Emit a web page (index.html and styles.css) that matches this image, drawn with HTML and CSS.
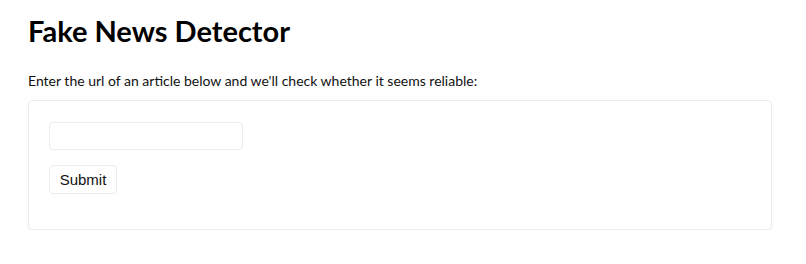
FILE: index.html
```html
<!DOCTYPE html>
<html>
<head>
<meta charset="utf-8">
<link rel="stylesheet" href="styles.css">
</head>
<body>
<div class="page">
  <h1 class="title">Fake News Detector</h1>
  <p class="intro">Enter the url of an article below and we'll check whether it seems reliable:</p>
  <form class="card">
    <input class="url-input" type="text">
    <button class="submit" type="button">Submit</button>
  </form>
</div>
</body>
</html>
```
FILE: styles.css
```css
html, body {
  margin: 0;
  padding: 0;
  background: #fff;
}
.page {
  padding: 14px 34px 0 28px;
  font-family: Lato, "Noto Sans", sans-serif;
  color: #111;
}
.title {
  font-size: 29px;
  font-weight: 700;
  margin: 0;
  line-height: 34px;
  color: #000;
}
.intro {
  font-size: 14px;
  margin: 24px 0 10px 0;
  line-height: 18px;
}
.card {
  display: flex;
  flex-direction: column;
  align-items: flex-start;
  gap: 15px;
  border: 1px solid #ececec;
  border-radius: 5px;
  box-shadow: 0 1px 3px rgba(0,0,0,0.05);
  padding: 21px 20px 35px 20px;
}
.url-input {
  width: 194px;
  height: 28px;
  box-sizing: border-box;
  border: 1px solid #ececec;
  border-radius: 4px;
  margin: 0;
}
.submit {
  font-family: "Liberation Sans", Arial, sans-serif;
  font-size: 15px;
  color: #111;
  background: #fff;
  border: 1px solid #ececec;
  border-radius: 4px;
  height: 29px;
  width: 68px;
  padding: 0;
  margin: 0;
}
```
